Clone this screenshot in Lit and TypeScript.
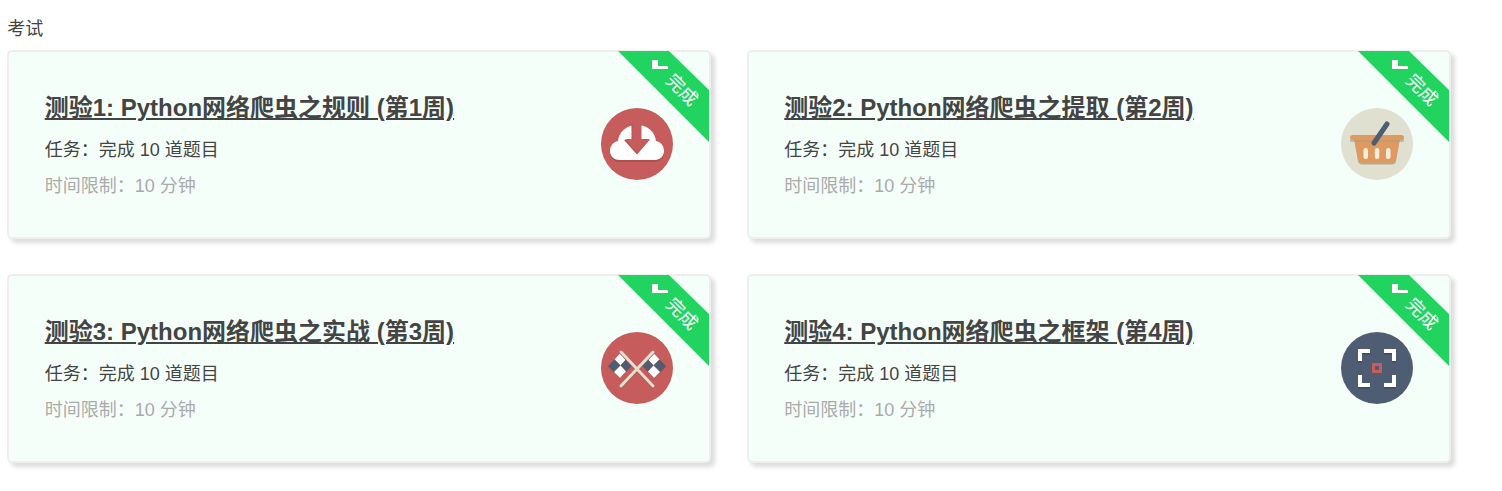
import { LitElement, html, css, svg } from "lit";
import { customElement } from "lit/decorators.js";

const cloud = svg`
  <circle cx="36" cy="36" r="36" fill="#c75c5c"/>
  <path d="M18 54h36c5 0 9-4 9-9 0-5-3-9-8-10-1-9-8-16-19-16S18 26 17 35c-5 1-8 5-8 10 0 5 4 9 9 9z" fill="#ab4f4f"/>
  <path d="M18 52h36c5 0 9-4 9-9 0-5-3-9-8-10-1-9-8-16-19-16S18 24 17 33c-5 1-8 5-8 10 0 5 4 9 9 9z" fill="#fff"/>
  <path d="M30.500 15h9v17h9L36 46.500 23 32h7.500z" fill="#b35353"/>
  <path d="M31.500 15h9v16h8.500L36 45 24 31h7.500z" fill="#c75c5c"/>
`;

const basket = svg`
  <circle cx="36" cy="36" r="36" fill="#e0e0d1"/>
  <path d="M13 31h46l-4 22c-.4 2-2 3.500-4 3.500H21c-2 0-3.600-1.500-4-3.500z" fill="#ab9d87" opacity=".8"/>
  <path d="M13 30h46l-4.200 22c-.4 1.500-2 2.700-3.800 2.700H21c-1.800 0-3.400-1.200-3.800-2.700z" fill="#e0995e"/>
  <rect x="9" y="31" width="54" height="3" rx="1.500" fill="#ab9d87" opacity=".6"/>
  <rect x="9" y="27" width="54" height="5" rx="2.500" fill="#e0995e"/>
  <rect x="22.500" y="40" width="4.500" height="11" rx="2.200" fill="#f5eedd"/>
  <rect x="33.800" y="40" width="4.500" height="11" rx="2.200" fill="#f5eedd"/>
  <rect x="45" y="40" width="4.500" height="11" rx="2.200" fill="#f5eedd"/>
  <path d="M33 35L46 16" stroke="#4f5d73" stroke-width="5" stroke-linecap="round"/>
`;

const flagHalf = svg`
  <path d="M13.500 27.500l6-6.500 6 6-6 6.500zM19.500 33.500l6-6.500 5.500 6-6 6.500zM7 34l6.500-6.500 6 6-6.500 6.500zM13 40l6.500-6.500 5.500 6-6 6.500z" fill="#ab4f4f" transform="translate(0 1)"/>
  <path d="M13.500 27.500l6-6.500 6 6-6 6.500z" fill="#fff"/>
  <path d="M19.500 33.500l6-6.500 5.500 6-6 6.500z" fill="#4f5d73"/>
  <path d="M7 34l6.500-6.500 6 6-6.500 6.500z" fill="#4f5d73"/>
  <path d="M13 40l6.500-6.500 5.500 6-6 6.500z" fill="#fff"/>
`;

const flags = svg`
  <circle cx="36" cy="36" r="36" fill="#c75c5c"/>
  ${flagHalf}
  <g transform="matrix(-1 0 0 1 72 0)">${flagHalf}</g>
  <path d="M20 20l32 34M52 20L20 54" stroke="#ab4f4f" stroke-width="3" stroke-linecap="round" transform="translate(0 1)"/>
  <path d="M20 20l32 34M52 20L20 54" stroke="#e0e0d1" stroke-width="3" stroke-linecap="round"/>
`;

const target = svg`
  <circle cx="36" cy="36" r="36" fill="#4f5d73"/>
  <path d="M19 29V19h10M53 29V19H43M19 43v10h10M53 43v10H43" fill="none" stroke="#3f4b5e" stroke-width="4" transform="translate(0 1.500)"/>
  <path d="M19 29V19h10M53 29V19H43M19 43v10h10M53 43v10H43" fill="none" stroke="#fff" stroke-width="4"/>
  <rect x="31" y="31" width="10" height="10" fill="#c75c5c"/>
  <rect x="34" y="34" width="4" height="4" fill="#4f5d73"/>
`;

const exams = [
  { title: "测验1: Python网络爬虫之规则 (第1周)", icon: cloud },
  { title: "测验2: Python网络爬虫之提取 (第2周)", icon: basket },
  { title: "测验3: Python网络爬虫之实战 (第3周)", icon: flags },
  { title: "测验4: Python网络爬虫之框架 (第4周)", icon: target },
];

@customElement("app-root")
export class AppRoot extends LitElement {
  static styles = css`
    :host {
      display: block;
      padding: 18px 0 28px 7.25px;
      font-family: "Liberation Sans", "Noto Sans CJK SC", sans-serif;
      color: #444;
    }

    .label {
      font-size: 18px;
      line-height: 22px;
      margin-bottom: 10px;
    }

    .grid {
      display: grid;
      grid-template-columns: repeat(2, 704px);
      column-gap: 35.5px;
      row-gap: 35px;
    }

    .card {
      position: relative;
      box-sizing: border-box;
      height: 189px;
      padding: 39px 36px 0 35.5px;
      display: flex;
      justify-content: space-between;
      background: #f5fffa;
      border: 2px solid #eee;
      border-radius: 5px;
      box-shadow: 4px 4px 4px #ddd;
    }

    .title {
      font-size: 24px;
      font-weight: 700;
      line-height: 34px;
      text-decoration: underline;
    }

    .task,
    .limit {
      font-size: 18px;
      line-height: 36px;
    }

    .task {
      margin-top: 7px;
    }

    .limit {
      color: #aaa;
    }

    .icon {
      width: 72px;
      height: 72px;
      margin-top: 17px;
      flex: none;
    }

    .ribbon {
      position: absolute;
      top: -1px;
      right: 0;
      width: 92px;
      height: 92px;
    }

    .ribbon-text {
      position: absolute;
      top: 28px;
      right: 9px;
      font-size: 18px;
      line-height: 20px;
      color: #fff;
      transform: rotate(45deg);
    }
  `;

  render() {
    return html`
      <div class="label">考试</div>
      <div class="grid">
        ${exams.map(
          (e) => html`
            <div class="card">
              <div>
                <div class="title">${e.title}</div>
                <div class="task">任务：完成 10 道题目</div>
                <div class="limit">时间限制：10 分钟</div>
              </div>
              <svg class="icon" viewBox="0 0 72 72">${e.icon}</svg>
              <svg class="ribbon" viewBox="0 0 92 92">
                <path d="M1 0h51l40 39v52z" fill="#21d45f" />
                <path d="M35 9h6v6h9l1 1v2H35z" fill="#fff" />
              </svg>
              <span class="ribbon-text">完成</span>
            </div>
          `
        )}
      </div>
    `;
  }
}
